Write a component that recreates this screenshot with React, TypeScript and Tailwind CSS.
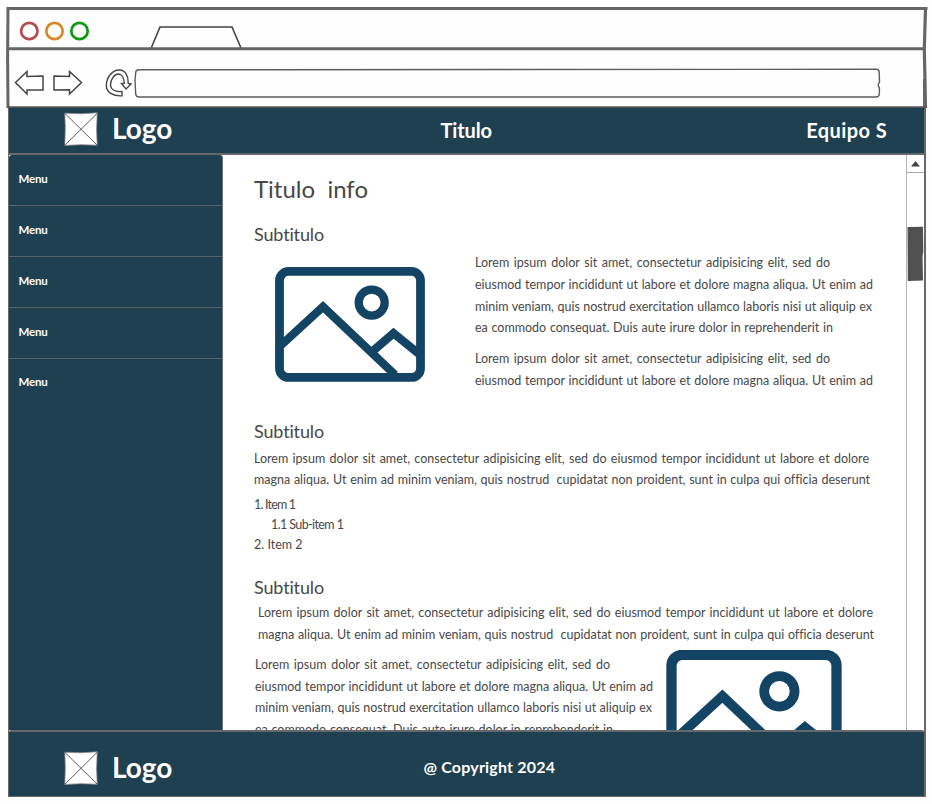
import type { ReactNode } from "react";

function Line({ width, children }: { width: string; children: ReactNode }) {
  return (
    <div className={`whitespace-pre [text-align-last:justify] ${width}`}>{children}</div>
  );
}

function Picture({ className }: { className: string }) {
  return (
    <svg viewBox="0 0 150 114.5" className={className} fill="none" stroke="#144463" strokeWidth="8.3">
      <rect x="4.5" y="4.2" width="141" height="106" rx="9" strokeWidth="8.8" />
      <circle cx="96.7" cy="35.3" r="13" />
      <path d="M6 78 48 39.5 120 107.5M97 84.5 118.5 66 145 87.5" />
    </svg>
  );
}

function Brand() {
  return (
    <div className="flex items-center">
      <svg className="h-[34px] w-[34px]" viewBox="0 0 34 34">
        <path d="M.8 1.2 17 1.8 33.2.8 32.6 18 33.2 33.2 17 32.7.8 33.4 1.3 16Z" fill="#fff" stroke="#8a8a8a" strokeWidth=".8" />
        <path d="M1 1.5 33 33M33 1.5 1 33" stroke="#333" strokeWidth=".8" />
      </svg>
      <span className="-mt-[2px] ml-[14px] text-[28px] leading-[34px] font-bold">Logo</span>
    </div>
  );
}

function BrowserChrome() {
  return (
    <div className="relative flex h-[102px] w-full flex-col">
      <div className="flex h-[43px] items-end pl-[12px]">
        <svg className="mb-[7px] h-[22px] w-[74px]" viewBox="0 0 74 22" fill="none" strokeWidth="2.7">
          <circle cx="11.3" cy="11" r="8.2" stroke="#b64b4f" />
          <circle cx="36.5" cy="11" r="8.2" stroke="#d88927" />
          <circle cx="61.5" cy="11" r="8.2" stroke="#0b9b12" />
        </svg>
        <svg className="ml-[58px] h-[24px] w-[94px]" viewBox="0 0 94 24" fill="none" stroke="#444" strokeWidth="1.6">
          <path d="M1.2 23 10 2H82L91 23" />
        </svg>
      </div>
      <div className="flex h-[59px] items-center pt-[8px] pl-[8px]">
        <svg className="h-[26px] w-[30px]" viewBox="0 0 30 26" fill="none" stroke="#444" strokeWidth="1.5">
          <path d="M1.5 12.5 13 1.5V6.5L29 6V20H13V24Z" />
        </svg>
        <svg className="ml-[9px] h-[26px] w-[30px]" viewBox="0 0 30 26" fill="none" stroke="#444" strokeWidth="1.5">
          <path d="M28.5 12.5 16.5 1.5V6.5L1 6V20L16.5 19.7V24Z" />
        </svg>
        <svg className="ml-[22px] h-[28px] w-[28px]" viewBox="0 0 28 28" fill="none" stroke="#444" strokeWidth="1.4">
          <path d="M17 22.5V26.8C8 27.5 1.3 23 1.3 16.5 1.5 8 7.5 1 14 1 20 1 23.5 6 23.2 14.5L26 15 21 20 16.5 14.5 19.3 14.3C19 8.5 16.5 5 13.5 5 9 5 5.3 11.5 5.5 16 6 21 10.5 23 17 22.5Z" />
        </svg>
      </div>
      <svg className="absolute inset-0 h-[102px] w-[922px]" viewBox="0 0 922 102" fill="none">
        <path d="M.5 2.5H921.5M2 2.5 1.6 50 2 102M2 42.8H918" stroke="#666" strokeWidth="3" />
        <path d="M919.5 2.5 918.3 43 919 74 919.5 102" stroke="#666" strokeWidth="3.2" />
        <path d="M918.5 73V102" stroke="#666" strokeWidth="3" />
        <path d="M1 101.5H921" stroke="#555" strokeWidth="2.4" />
        <path d="M133 63.8 870 63.3Q873 63.3 873.2 66L873.5 76 872 79 873.4 82V88Q873 91 870 91L133 91Q130 91 129.7 88L129 74 129.8 66Q130 63.8 133 63.8Z" stroke="#5c5c5c" strokeWidth="1.4" />
      </svg>
    </div>
  );
}

const menu = ["Menu", "Menu", "Menu", "Menu", "Menu"];

export default function App() {
  return (
    <div className="h-[804px] w-[932px] overflow-hidden bg-[#fefefe] pt-[6px] pl-[6px] font-['Lato','Open_Sans',sans-serif] text-[#484848] [font-variant-ligatures:none]">
      <BrowserChrome />
      <div className="ml-[2px] flex h-[689px] w-[918px] flex-col border-x border-[#686868] border-r-2 bg-white">
        <header className="flex h-[47px] shrink-0 items-center border-b-2 border-[#65696b] bg-[#1e4050] pr-[37px] pb-[3px] pl-[55px] text-white">
          <Brand />
          <span className="ml-[268px] pt-px text-[20px] font-bold tracking-[-0.1px]">Titulo</span>
          <span className="ml-auto pt-px text-[20px] font-bold tracking-[0.4px]">Equipo S</span>
        </header>

        <div className="flex h-[575px] shrink-0">
          <nav className="w-[214px] shrink-0 rounded-t-[3px] border-r border-[#68777e] bg-[#1e4050] text-[11.5px] font-bold tracking-[-0.2px] text-white">
            {menu.map((label, i) => (
              <div key={i} className={`flex h-[51px] items-center pl-[9.5px] ${i < 4 ? "border-b border-[#59646a] pb-[2px]" : "pb-[5px]"}`}>
                {label}
              </div>
            ))}
          </nav>

          <main className="flex h-[575px] min-w-0 flex-1 flex-col items-start overflow-hidden pt-[19px] pl-[31px] text-[12.5px] leading-[21.7px]">
            <h1 className="h-[30px] w-[114px] whitespace-pre text-[24px] leading-[30px] [text-align-last:justify]">Titulo  info</h1>
            <h2 className="mt-[19px] text-[18px] leading-[22px] tracking-[-0.15px]">Subtitulo</h2>
            <section className="mt-[7.2px] flex">
              <Picture className="mt-[14.5px] ml-[21px] h-[115px] w-[150px]" />
              <div className="ml-[50px]">
                <Line width="w-[355px]">Lorem ipsum dolor sit amet, consectetur adipisicing elit, sed do</Line>
                <Line width="w-[398px]">eiusmod tempor incididunt ut labore et dolore magna aliqua. Ut enim ad</Line>
                <Line width="w-[397px]">minim veniam, quis nostrud exercitation ullamco laboris nisi ut aliquip ex</Line>
                <Line width="w-[358px]">ea commodo consequat. Duis aute irure dolor in reprehenderit in</Line>
                <div className="mt-[9.3px]">
                  <Line width="w-[355px]">Lorem ipsum dolor sit amet, consectetur adipisicing elit, sed do</Line>
                  <Line width="w-[398px]">eiusmod tempor incididunt ut labore et dolore magna aliqua. Ut enim ad</Line>
                </div>
              </div>
            </section>
            <h2 className="mt-[28.2px] text-[18px] leading-[22px] tracking-[-0.15px]">Subtitulo</h2>
            <div className="mt-[5.8px]">
              <Line width="w-[615px]">Lorem ipsum dolor sit amet, consectetur adipisicing elit, sed do eiusmod tempor incididunt ut labore et dolore</Line>
              <Line width="w-[616px]">magna aliqua. Ut enim ad minim veniam, quis nostrud  cupidatat non proident, sunt in culpa qui officia deserunt</Line>
            </div>
            <div className="mt-[4.2px] leading-[20px]">
              <div className="tracking-[-0.8px]">1. Item 1</div>
              <div className="pl-[17px] tracking-[-0.6px]">1.1 Sub-item 1</div>
              <div>2. Item 2</div>
            </div>
            <h2 className="mt-[20.5px] text-[18px] leading-[22px] tracking-[-0.15px]">Subtitulo</h2>
            <div className="mt-[4.2px] ml-[4px]">
              <Line width="w-[615px]">Lorem ipsum dolor sit amet, consectetur adipisicing elit, sed do eiusmod tempor incididunt ut labore et dolore</Line>
              <Line width="w-[616px]">magna aliqua. Ut enim ad minim veniam, quis nostrud  cupidatat non proident, sunt in culpa qui officia deserunt</Line>
            </div>
            <section className="mt-[4.4px] ml-[1px] flex">
              <div className="mt-[4.3px] w-[398px]">
                <Line width="w-[355px]">Lorem ipsum dolor sit amet, consectetur adipisicing elit, sed do</Line>
                <Line width="w-[398px]">eiusmod tempor incididunt ut labore et dolore magna aliqua. Ut enim ad</Line>
                <Line width="w-[397px]">minim veniam, quis nostrud exercitation ullamco laboris nisi ut aliquip ex</Line>
                <Line width="w-[358px]">ea commodo consequat. Duis aute irure dolor in reprehenderit in</Line>
              </div>
              <Picture className="ml-[13px] h-[134px] w-[176px]" />
            </section>
          </main>

          <aside className="flex w-[18px] shrink-0 flex-col border-l border-[#b5b5b5]">
            <div className="flex h-[18px] items-center justify-center border-b border-[#aaa]">
              <svg className="h-[6px] w-[9px]" viewBox="0 0 9 6"><path d="M4.5 0 9 5.5H0Z" fill="#444" /></svg>
            </div>
            <svg className="mt-[53px] h-[56px] w-[17px]" viewBox="0 0 17 56"><path d="M.5 1 16 .8 16.3 26 15.5 30 16 54.5.8 55Z" fill="#505050" /></svg>
          </aside>
        </div>

        <footer className="flex h-[67px] shrink-0 items-center rounded-t-[2px] border-t-2 border-b border-[#65696b] bg-[#1e4050] pt-[7px] pl-[55px] text-white">
          <Brand />
          <span className="-mt-px ml-[251px] text-[16px] font-bold tracking-[0.2px]">@ Copyright 2024</span>
        </footer>
      </div>
    </div>
  );
}
